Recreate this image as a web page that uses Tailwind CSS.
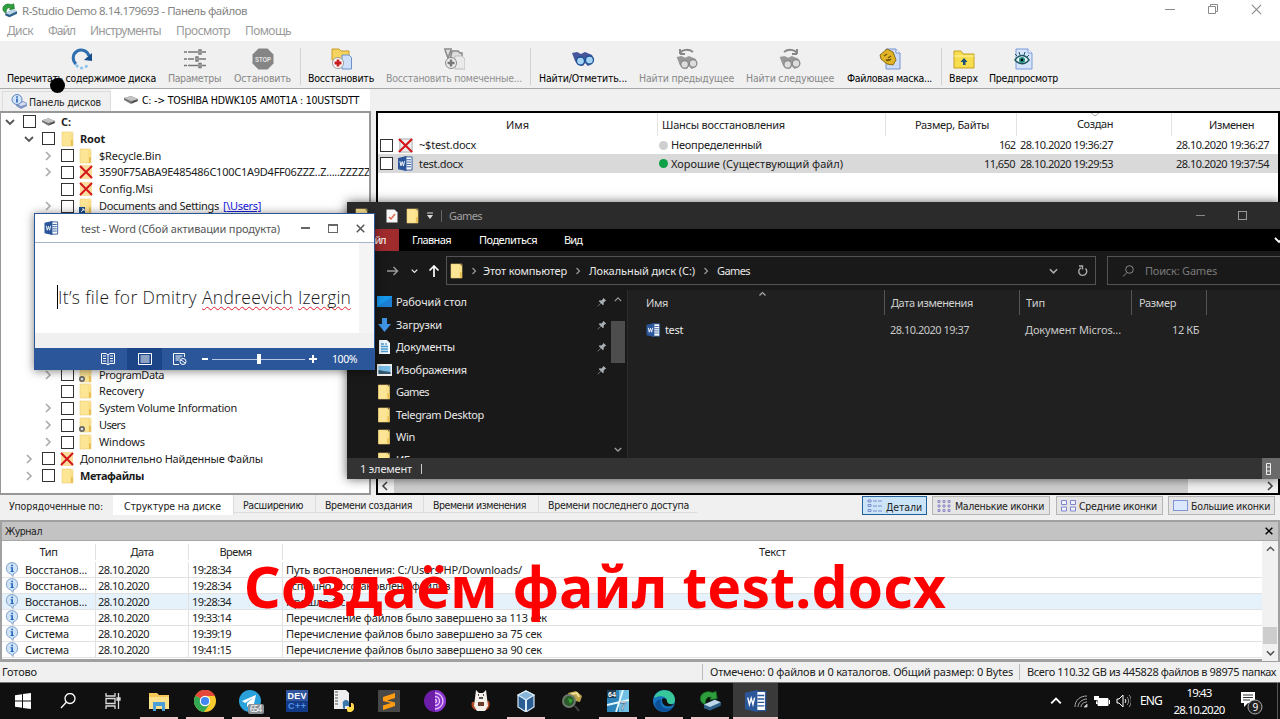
<!DOCTYPE html>
<html lang="ru">
<head>
<meta charset="utf-8">
<title>R-Studio Demo</title>
<script src="https://cdn.jsdelivr.net/npm/@tailwindcss/browser@4"></script>
</head>
<body class="w-[1280px] h-[719px] overflow-hidden bg-[#f0f0f0] font-['Noto_Sans',sans-serif] text-[11px] leading-4 text-[#222]">
<svg class="hidden">
  <symbol id="folder" viewBox="0 0 14 16"><path d="M1 1h9l2 2v12H1z" fill="#fbe08a"/><path d="M1 1h8v14H1z" fill="#fde596"/><path d="M10 9l2 .5V15h-2z" fill="#e9bd4e"/><path d="M1 1h11v14H1z" fill="none" stroke="#efcf74" stroke-width=".6"/></symbol>
  <symbol id="cross" viewBox="0 0 14 16"><path d="M1 1h12v14H1z" fill="#fbdc9c"/><path d="M1 2l12 12M13 2L1 14" stroke="#d3161c" stroke-width="2" fill="none"/></symbol>
  <symbol id="drive" viewBox="0 0 16 10"><path d="M1 3l7-2 7 3v2l-7 3-7-4z" fill="#777"/><path d="M1 3l7-2 7 3-7 2z" fill="#c4c4c4"/><path d="M9 7l5-2v1L9 8z" fill="#333"/></symbol>
  <symbol id="word" viewBox="0 0 16 16"><path d="M7 1h8v14H7z" fill="#fff" stroke="#2b579a"/><path d="M9 4h5M9 6.5h5M9 9h5M9 11.5h5" stroke="#2b579a"/><path d="M0 2l9-2v16l-9-2z" fill="#2b579a"/><path d="M2 5.5l1.2 5 1.3-4.5 1.3 4.5 1.2-5" stroke="#fff" fill="none"/></symbol>
  <symbol id="right" viewBox="0 0 8 10"><path d="M2 1l4 4-4 4" fill="none" stroke="currentColor" stroke-width="1.6"/></symbol>
  <symbol id="down" viewBox="0 0 10 8"><path d="M1 2l4 4 4-4" fill="none" stroke="currentColor" stroke-width="1.8"/></symbol>
  <symbol id="up" viewBox="0 0 10 8"><path d="M1 6l4-4 4 4" fill="none" stroke="currentColor" stroke-width="1.6"/></symbol>
  <symbol id="left" viewBox="0 0 8 10"><path d="M6 1L2 5l4 4" fill="none" stroke="currentColor" stroke-width="1.6"/></symbol>
  <symbol id="x" viewBox="0 0 12 12"><path d="M1 1l10 10M11 1L1 11" fill="none" stroke="currentColor" stroke-width="1.3"/></symbol>
  <symbol id="info" viewBox="0 0 14 16"><path d="M7 .7a6 6 0 0 1 1.5 11.8L8 15.5 5.500 12.500A6 6 0 0 1 7 .7z" fill="#cfe3f8" stroke="#7d9cc4"/><path d="M6.200 3h1.800v1.600H6.200zM5.500 5.700H8v4h.8v1H5.500v-1h.8V6.700h-.8z" fill="#1c62b8"/></symbol>
  <symbol id="pin" viewBox="0 0 12 12"><path d="M7.500.8l3.700 3.700-1.200.2-2 2 .1 2.300-1 .8-2.300-2.300L1 11.500.600 11.100l3.800-3.900L2.200 5l.9-1 2.300.1 2-2z" fill="#a9b0b5"/></symbol>
  <symbol id="bino" viewBox="0 0 24 16"><path d="M1 2l5-1 4 2 4-2 7 3 2 4-2 5-4 2-3-3-2 3-5-1-3-4z" fill="var(--a)"/><circle cx="9.500" cy="10" r="4" fill="var(--b)" stroke="var(--c)" stroke-width="1.300"/><circle cx="18.500" cy="9" r="4" fill="var(--b)" stroke="var(--c)" stroke-width="1.300"/></symbol>
  <symbol id="rs" viewBox="0 0 20 18"><path d="M2 7C2 2 8 0 12 2l3-1 1 6-6 1 1-2C8 5 6 7 6 12 3 11 2 9 2 7z" fill="#2f9e3c" stroke="#136a24" stroke-width=".7"/><path d="M5 12l9-4 5 2v3l-9 4-5-2z" fill="#2d5f87"/><path d="M5 12l9-4 5 2-9 4z" fill="#bdd8e8"/></symbol>
</svg>

<div class="flex flex-col w-[1280px] h-[719px] relative">
  <!-- Title bar -->
  <header class="flex items-center h-[22px] bg-white shrink-0 text-[#858585] text-[11.500px]">
    <svg class="w-[17px] h-[15px] ml-px mb-0.5 shrink-0"><use href="#rs"/></svg>
    <span data-fit class="ml-1 w-[225px]">R-Studio Demo 8.14.179693 - Панель файлов</span>
    <div class="flex items-center ml-auto mr-[18px] gap-[33px] mb-1 text-[#8a8a8a]">
      <svg class="w-[10px] h-[10px]" fill="none" stroke="currentColor"><path d="M0 5.500h10"/></svg>
      <svg class="w-[10px] h-[10px]" fill="none" stroke="currentColor"><path d="M.5 2.500h7v7h-7zM2.500 2.500v-2h7v7h-2"/></svg>
      <svg class="w-[11px] h-[11px]"><use href="#x"/></svg>
    </div>
  </header>
  <nav class="flex items-center h-[19px] bg-white shrink-0 text-[#9a9a9a] text-[12px] pb-[1px]">
    <span data-fit class="ml-[7px] w-[26px]">Диск</span><span data-fit class="ml-[15px] w-[27px]">Файл</span><span data-fit class="ml-[15px] w-[71px]">Инструменты</span><span data-fit class="ml-[15px] w-[54px]">Просмотр</span><span data-fit class="ml-[15px] w-[46px]">Помощь</span>
  </nav>

  <!-- Toolbar -->
  <div class="flex h-[48px] shrink-0 pt-[7px] pl-[7px] border-b border-[#a8a8a8] bg-[#f0f0f0] font-['DejaVu_Sans_Condensed','DejaVu_Sans',sans-serif] text-[10.500px] text-black">
    <div class="flex flex-col items-center w-[149px]"><svg class="size-[22px]" viewBox="0 0 22 22"><path d="M5 16A8 8 0 1 1 18 8" fill="none" stroke="#2f6fb0" stroke-width="3"/><path d="M21 5v8l-8-1z" fill="#174f8c"/><path d="M5 17c4 4 8 4 12 0" fill="none" stroke="#8cc3ec" stroke-width="2.500" stroke-dasharray="3 2"/></svg><span data-fit class="w-full">Перечитать содержимое диска</span></div>
    <div class="flex flex-col items-center w-[53px] ml-3 text-[#888]"><svg class="size-[22px]" viewBox="0 0 22 22" fill="none" stroke="#777" stroke-width="1.400"><path d="M0 4h3M4 4h10M18 4h4M15 2h2v4h-2zM0 11h3M4 11h6M15 11h7M12 9h2v4h-2zM0 17.500h3M4 17.500h10M18 17.500h4M15 15.500h2v4h-2z"/></svg><span data-fit class="w-full">Параметры</span></div>
    <div class="flex flex-col items-center w-[57px] ml-[13px] text-[#888]"><svg class="size-[22px]" viewBox="0 0 22 22"><path d="M6.500.5h9l6 6v9l-6 6h-9l-6-6v-9z" fill="#858585"/><text x="3" y="14" font-size="8" font-weight="700" textLength="16" lengthAdjust="spacingAndGlyphs" fill="#e4e4e4" font-family="Liberation Sans">STOP</text></svg><span data-fit class="w-full">Остановить</span></div>
    <i class="w-px h-[37px] ml-[9px] bg-[#d2d2d2]"></i>
    <div class="flex flex-col items-center w-[66px] ml-[7px]"><svg class="size-[22px]" viewBox="0 0 22 22"><path d="M2 1h7l2 2h8v9H2z" fill="#f5d35e" stroke="#c99b28"/><path d="M12 7h7l2.500 2.500V21H12z" fill="#cfe0fa" stroke="#6d8fce"/><circle cx="8" cy="15" r="5.500" fill="#fff" stroke="#999"/><path d="M8 11.500v7M4.500 15h7" stroke="#c81e1e" stroke-width="2.800"/></svg><span data-fit class="w-full">Восстановить</span></div>
    <div class="flex flex-col items-center w-[136px] ml-3 text-[#909090]"><svg class="size-[22px]" viewBox="0 0 22 22"><path d="M1 1h8M2 2l3 8 3-8M9 3h6l2 2h2v7H7z" fill="#ddd" stroke="#888" stroke-width="1.500"/><path d="M12 8h7l3 3v10H12z" fill="#eaeaea" stroke="#bbb"/><circle cx="8" cy="15" r="5.500" fill="#eee" stroke="#888"/><path d="M8 11.500v7M4.500 15h7" stroke="#777" stroke-width="2.500"/></svg><span data-fit class="w-full">Восстановить помеченные...</span></div>
    <i class="w-px h-[37px] ml-2 bg-[#d2d2d2]"></i>
    <div class="flex flex-col items-center w-[88px] ml-2 [--a:#46569c] [--b:#a5d4f5] [--c:#1d5294]"><svg class="w-6 h-[16px] mt-[3px] mb-[3px]"><use href="#bino"/></svg><span data-fit class="w-full">Найти/Отметить...</span></div>
    <div class="flex flex-col items-center w-[95px] ml-3 text-[#888] [--a:#999] [--b:#ddd] [--c:#888]"><svg class="w-6 h-[7px]" viewBox="0 0 24 7"><path d="M5 6V1M5 6h5M5 5c3-4 9-4 13-1" fill="none" stroke="#888" stroke-width="2"/></svg><svg class="w-6 h-[15px]"><use href="#bino"/></svg><span data-fit class="w-full">Найти предыдущее</span></div>
    <div class="flex flex-col items-center w-[88px] ml-3 text-[#888] [--a:#999] [--b:#ddd] [--c:#888]"><svg class="w-6 h-[7px]" viewBox="0 0 24 7"><path d="M19 6V1M19 6h-5M19 5C16 1 10 1 6 4" fill="none" stroke="#888" stroke-width="2"/></svg><svg class="w-6 h-[15px]"><use href="#bino"/></svg><span data-fit class="w-full">Найти следующее</span></div>
    <div class="flex flex-col items-center w-[85px] ml-[13px]"><svg class="size-[22px]" viewBox="0 0 22 22"><path d="M7 1h10l4 4v16H7z" fill="#ccdcfa" stroke="#7894d4"/><path d="M17 1v4h4" fill="#fff" stroke="#7894d4"/><path d="M1 7l7-6 6 3 3 8-3 5-6-1-6-5z" fill="#e0b426" stroke="#8f6b10"/><path d="M5 8l3-2M9 10l3-2M7 12c2 1 4 0 5-1" stroke="#7a5a08" stroke-width="1.500"/></svg><span data-fit class="w-full">Файловая маска...</span></div>
    <i class="w-px h-[37px] ml-[9px] bg-[#d2d2d2]"></i>
    <div class="flex flex-col items-center w-[29px] ml-[7px]"><svg class="size-[22px]" viewBox="0 0 22 22"><path d="M1 3h7l2 3h11v14H1z" fill="#f8de4e" stroke="#c7a022"/><path d="M1 8h20" stroke="#fff3a5"/><path d="M11 10l3.500 4h-2v3H10v-3H7.500z" fill="#1b4e78"/></svg><span data-fit class="w-full">Вверх</span></div>
    <div class="flex flex-col items-center w-[69px] ml-[11px]"><svg class="size-[22px]" viewBox="0 0 22 22"><path d="M3 1h12l4 4v16H3z" fill="#d5e3fb" stroke="#7c9bdb"/><path d="M15 1v4h4" fill="#fff" stroke="#7c9bdb"/><path d="M2 12c4-6 10-6 14 0-4 5-10 5-14 0z" fill="#e6f7f5" stroke="#1d5460" stroke-width="1.400"/><circle cx="9" cy="12" r="3" fill="#238b80"/><circle cx="9" cy="12" r="1.200" fill="#000"/><path d="M4 8L2 6M7 7L6 4M11 7l1-3M14 9l2-2" stroke="#1d5460"/></svg><span data-fit class="w-full">Предпросмотр</span></div>
  </div>

  <!-- Panel tabs -->
  <div class="flex h-[22px] shrink-0 items-end font-['DejaVu_Sans_Condensed','DejaVu_Sans',sans-serif] text-[10.500px]">
    <div class="flex items-center h-[20px] w-[109px] ml-0.5 pl-2 border border-b-0 border-[#dcdcdc]"><svg class="w-[16px] h-[15px] shrink-0" viewBox="0 0 16 15"><path d="M6 9l6-2 4 2v3l-6 3-5-3z" fill="#7f95c3"/><path d="M6 10l6-2 4 2-6 2z" fill="#d4def3"/><circle cx="6" cy="5.500" r="5" fill="#d2e4f9" stroke="#5f83bd"/><path d="M6 2.300v1.400M6 4.600v4" stroke="#1c55a8" stroke-width="1.500"/></svg><span data-fit class="ml-[2px] w-[72px]">Панель дисков</span></div>
    <div class="flex items-center h-[22px] w-[259px] pl-[12px] bg-white text-black"><svg class="w-4 h-[10px] shrink-0"><use href="#drive"/></svg><span data-fit class="ml-[3px] w-[217px]">C: -> TOSHIBA HDWK105 AM0T1A : 10USTSDTT</span></div>
  </div>

  <!-- Panes -->
  <main class="flex h-[384px] shrink-0">
    <section class="w-[371px] border-2 border-[#979797] border-l bg-white overflow-hidden text-[#1c1c1c]">
      <div class="flex items-center h-[16.850px] mt-[0.500px] pl-1 font-bold"><svg class="w-[10px] h-2 text-[#555]"><use href="#down"/></svg><i class="size-[13px] border border-[#333] ml-[8px]"></i><svg class="w-[15px] h-[10px] ml-[5px]"><use href="#drive"/></svg><span data-fit class="ml-[5px] w-[10px]">C:</span></div>
      <div class="flex items-center h-[16.850px] pl-[23px] font-bold"><svg class="w-[10px] h-2 text-[#555]"><use href="#down"/></svg><i class="size-[13px] border border-[#333] ml-[8px]"></i><svg class="w-[14px] h-4 ml-[6px]"><use href="#folder"/></svg><span data-fit class="ml-[5px] w-[25px]">Root</span></div>
      <div class="flex items-center h-[16.850px] pl-[43px]"><svg class="w-2 h-[10px] text-[#aaa]"><use href="#right"/></svg><i class="size-[13px] border border-[#333] ml-[9px]"></i><svg class="w-[14px] h-4 ml-[5px]"><use href="#folder"/></svg><span data-fit class="ml-[6px] w-[62px]">$Recycle.Bin</span></div>
      <div class="flex items-center h-[16.850px] pl-[43px]"><svg class="w-2 h-[10px] shrink-0 text-[#aaa]"><use href="#right"/></svg><i class="size-[13px] border border-[#333] ml-[9px] shrink-0"></i><svg class="w-[14px] h-4 ml-[5px] shrink-0"><use href="#cross"/></svg><span data-fit class="ml-[6px] w-[271px] shrink-0">3590F75ABA9E485486C100C1A9D4FF06ZZZ..Z.....ZZZZZ</span></div>
      <div class="flex items-center h-[16.850px] pl-[60px]"><i class="size-[13px] border border-[#333]"></i><svg class="w-[14px] h-4 ml-[5px]"><use href="#cross"/></svg><span data-fit class="ml-[6px] w-[54px]">Config.Msi</span></div>
      <div class="flex items-center h-[16.850px] pl-[43px]"><svg class="w-2 h-[10px] text-[#aaa]"><use href="#right"/></svg><i class="size-[13px] border border-[#333] ml-[9px]"></i><svg class="w-[14px] h-4 ml-[5px]" viewBox="0 0 14 16"><use href="#folder"/><path d="M0 9h6v6H0z" fill="#1d4c86"/><path d="M2 14l3-3M3 11h2v2" stroke="#fff" fill="none"/></svg><span data-fit class="ml-[6px] w-[120px]">Documents and Settings</span><span data-fit class="ml-[4px] w-[38px] underline text-[#2020e0]">[\Users]</span></div>
      <div class="h-[151.650px]"></div>
      <div class="flex items-center h-[16.850px] pl-[43px]"><svg class="w-2 h-[10px] text-[#aaa]"><use href="#right"/></svg><i class="size-[13px] border border-[#333] ml-[9px]"></i><svg class="w-[14px] h-4 ml-[5px]" viewBox="0 0 14 16"><use href="#folder"/><circle cx="3" cy="12" r="3" fill="#666"/><circle cx="3" cy="12" r="1.300" fill="#ddd"/></svg><span data-fit class="ml-[6px] w-[65px]">ProgramData</span></div>
      <div class="flex items-center h-[16.850px] pl-[60px]"><i class="size-[13px] border border-[#333]"></i><svg class="w-[14px] h-4 ml-[5px]"><use href="#folder"/></svg><span data-fit class="ml-[6px] w-[45px]">Recovery</span></div>
      <div class="flex items-center h-[16.850px] pl-[43px]"><svg class="w-2 h-[10px] text-[#aaa]"><use href="#right"/></svg><i class="size-[13px] border border-[#333] ml-[9px]"></i><svg class="w-[14px] h-4 ml-[5px]"><use href="#folder"/></svg><span data-fit class="ml-[6px] w-[138px]">System Volume Information</span></div>
      <div class="flex items-center h-[16.850px] pl-[43px]"><svg class="w-2 h-[10px] text-[#aaa]"><use href="#right"/></svg><i class="size-[13px] border border-[#333] ml-[9px]"></i><svg class="w-[14px] h-4 ml-[5px]" viewBox="0 0 14 16"><use href="#folder"/><circle cx="3" cy="12" r="3" fill="#666"/><circle cx="3" cy="12" r="1.300" fill="#ddd"/></svg><span data-fit class="ml-[6px] w-[26px]">Users</span></div>
      <div class="flex items-center h-[16.850px] pl-[43px]"><svg class="w-2 h-[10px] text-[#aaa]"><use href="#right"/></svg><i class="size-[13px] border border-[#333] ml-[9px]"></i><svg class="w-[14px] h-4 ml-[5px]"><use href="#folder"/></svg><span data-fit class="ml-[6px] w-[46px]">Windows</span></div>
      <div class="flex items-center h-[16.850px] pl-[24px]"><svg class="w-2 h-[10px] text-[#aaa]"><use href="#right"/></svg><i class="size-[13px] border border-[#333] ml-[9px]"></i><svg class="w-[14px] h-4 ml-[5px]"><use href="#cross"/></svg><span data-fit class="ml-[6px] w-[183px]">Дополнительно Найденные Файлы</span></div>
      <div class="flex items-center h-[16.850px] pl-[24px] font-bold"><svg class="w-2 h-[10px] text-[#aaa]"><use href="#right"/></svg><i class="size-[13px] border border-[#333] ml-[9px]"></i><svg class="w-[14px] h-4 ml-[6px]"><use href="#folder"/></svg><span data-fit class="ml-[5px] w-[64px]">Метафайлы</span></div>
    </section>

    <section class="flex flex-col w-[904px] ml-[5px] border-2 border-black bg-white">
      <div class="flex h-[23px] items-center">
        <div class="flex justify-center w-[280px] border-r border-[#e3e3e3] h-full items-center"><span data-fit class="w-[23px]">Имя</span></div>
        <div class="flex items-center w-[228px] border-r border-[#e3e3e3] h-full pl-1"><span data-fit class="w-[123px]">Шансы восстановления</span></div>
        <div class="flex items-center w-[131px] border-r border-[#e3e3e3] h-full pl-[29px]"><span data-fit class="w-[74px]">Размер, Байты</span></div>
        <div class="flex flex-col w-[155px] border-r border-[#e3e3e3] h-full pl-[60px]"><svg class="w-2 h-[4px] ml-[14px] -mb-[1px] text-[#aaa]" viewBox="0 0 8 4"><path d="M0 0l4 3 4-3" stroke="currentColor" fill="none"/></svg><span data-fit class="w-[36px]">Создан</span></div>
        <div class="flex items-center h-full pl-[37px]"><span data-fit class="w-[45px]">Изменен</span></div>
      </div>
      <div class="flex h-[18px] items-center pl-[2px]">
        <i class="size-[13px] border border-[#333] bg-white"></i><svg class="size-[15px] ml-[5px]" viewBox="0 0 16 16"><path d="M2 1h13v14H2z" fill="#eee" stroke="#aaa"/><path d="M1 1l14 14M15 1L1 15" stroke="#d3161c" stroke-width="2.300"/></svg><span data-fit class="ml-[6px] w-[57px]">~$test.docx</span>
        <i class="size-[9px] rounded-full bg-[#cfcfcf] ml-[183px]"></i><span data-fit class="ml-[3px] w-[91px]">Неопределенный</span>
        <span data-fit class="ml-[237px] w-[16px]">162</span><span data-fit class="ml-[5px] w-[93px]">28.10.2020 19:36:27</span><span data-fit class="ml-[63px] w-[93px]">28.10.2020 19:36:27</span>
      </div>
      <div class="flex h-[19px] items-center pl-[2px] bg-[#d9d9d9]">
        <i class="size-[13px] border border-[#333] bg-white"></i><svg class="size-[15px] ml-[5px]"><use href="#word"/></svg><span data-fit class="ml-[6px] w-[44px]">test.docx</span>
        <i class="size-[9px] rounded-full bg-[#0da046] ml-[196px]"></i><span data-fit class="ml-[3px] w-[172px]">Хорошие (Существующий файл)</span>
        <span data-fit class="ml-[141px] w-[31px]">11,650</span><span data-fit class="ml-[5px] w-[93px]">28.10.2020 19:29:53</span><span data-fit class="ml-[63px] w-[93px]">28.10.2020 19:37:54</span>
      </div>
      <div class="flex items-center h-[15px] mt-auto bg-[#f1f1f1] text-[#444] pl-[3px] pr-[4px]"><svg class="w-2 h-[10px]"><use href="#left"/></svg><i class="w-[794px] h-full bg-[#cdcdcd] ml-[5px]"></i><svg class="w-2 h-[10px] ml-auto"><use href="#right"/></svg></div>
    </section>
  </main>

  <!-- Sort tabs and view buttons -->
  <div class="flex h-[25px] shrink-0 font-['DejaVu_Sans_Condensed','DejaVu_Sans',sans-serif] text-[10.500px]">
    <span data-fit class="ml-[9px] w-[94px] mt-[3px]">Упорядоченные по:</span>
    <div class="flex ml-[10px] h-[20px] w-[121px] pl-[11px] pt-[3px] bg-white border-r border-[#dcdcdc]"><span data-fit class="w-[97px]">Структуре на диске</span></div>
    <div class="flex h-[18px] w-[82px] pl-[9px] pt-[2px] border-r border-b border-[#dcdcdc]"><span data-fit class="w-[60px]">Расширению</span></div>
    <div class="flex h-[18px] w-[108px] pl-[9px] pt-[2px] border-r border-b border-[#dcdcdc]"><span data-fit class="w-[87px]">Времени создания</span></div>
    <div class="flex h-[18px] w-[115px] pl-[9px] pt-[2px] border-r border-b border-[#dcdcdc]"><span data-fit class="w-[93px]">Времени изменения</span></div>
    <div class="flex h-[18px] w-[158px] pl-[9px] pt-[2px] border-b border-[#dcdcdc]"><span data-fit class="w-[141px]">Времени последнего доступа</span></div>
    <div class="flex items-center mt-px h-[19px] w-[65px] ml-[165px] pl-1 bg-[#cce4f8] border border-[#235f99]"><svg class="w-[16px] h-[14px] mr-[3px]" viewBox="0 0 16 14" fill="none" stroke="#7e8bcf"><path d="M1 1h3v2H1zM1 5.500h3v2H1zM1 10.500h3v2H1z"/><path d="M6 2h10M6 7h10M6 12h10" stroke-dasharray="4 1"/></svg><span data-fit class="w-[36px] mt-0.5">Детали</span></div>
    <div class="flex items-center mt-px h-[19px] w-[118px] ml-[5px] pl-1 bg-[#e5e5e5] border border-[#b5b5b5]"><svg class="w-[15px] h-[12px] mr-[3px] shrink-0" viewBox="0 0 15 12" fill="none" stroke="#8a86c4"><path d="M1 .5h2v2H1zM6 .5h2v2H6zM11 .5h2v2h-2zM1 5h2v2H1zM6 5h2v2H6zM11 5h2v2h-2zM1 9.500h2v2H1zM6 9.500h2v2H6zM11 9.500h2v2h-2z"/></svg><span data-fit class="w-[89px]">Маленькие иконки</span></div>
    <div class="flex items-center mt-px h-[19px] w-[107px] ml-[6px] pl-1 bg-[#e5e5e5] border border-[#b5b5b5]"><svg class="w-[15px] h-[12px] mr-[3px] shrink-0" viewBox="0 0 15 12" fill="#eef3ff" stroke="#8084cc"><path d="M.5.5h5v4h-5zM9.500.5h5v4h-5zM.5 7h5v4h-5zM9.500 7h5v4h-5z"/></svg><span data-fit class="w-[78px]">Средние иконки</span></div>
    <div class="flex items-center mt-px h-[19px] w-[107px] ml-[5px] pl-1 bg-[#e5e5e5] border border-[#b5b5b5]"><i class="w-[15px] h-[11px] mr-[3px] shrink-0 border border-[#7f95d8] bg-[#dce8ff]"></i><span data-fit class="w-[79px]">Большие иконки</span></div>
  </div>

  <!-- Journal -->
  <section class="flex flex-col h-[142px] shrink-0 border-t-2 border-b-[3px] border-x-2 border-[#a0a0a0] bg-white">
    <div class="flex items-center h-[19px] bg-[#c3c3c3] border-b border-[#a6a6a6] pl-[3px] pr-[5px] shrink-0"><span data-fit class="w-[37px] font-['DejaVu_Sans_Condensed',sans-serif] text-[10.500px]">Журнал</span><svg class="size-[8px] ml-auto text-black" viewBox="0 0 12 12"><path d="M1 1l10 10M11 1L1 11" stroke="#000" stroke-width="2.200"/></svg></div>
    <div class="flex grow">
      <div class="w-[1260px]">
        <div class="flex h-[21px] items-center">
          <div class="flex justify-center w-[94px] border-r border-[#e2e2e2]"><span data-fit class="w-[18px]">Тип</span></div><div class="flex justify-center w-[93px] border-r border-[#e2e2e2]"><span data-fit class="w-[23px]">Дата</span></div><div class="flex justify-center w-[94px] border-r border-[#e2e2e2]"><span data-fit class="w-[32px]">Время</span></div><div class="flex justify-center w-[979px]"><span data-fit class="w-[27px]">Текст</span></div>
        </div>
        <div class="flex h-4 border-b border-[#e2e2e2]"><div class="flex w-[94px] border-r border-[#e2e2e2] pl-[3px]"><svg class="w-[14px] h-[15px] mr-[6px]"><use href="#info"/></svg><span data-fit class="w-[62px]">Восстанов...</span></div><div class="flex w-[93px] border-r border-[#e2e2e2] pl-[2px]"><span data-fit class="w-[51px]">28.10.2020</span></div><div class="flex w-[94px] border-r border-[#e2e2e2] pl-[3px]"><span data-fit class="w-[39px]">19:28:34</span></div><span data-fit class="ml-[3px] w-[236px]">Путь востановления: C:/Users/HP/Downloads/</span></div>
        <div class="flex h-4 border-b border-[#e2e2e2]"><div class="flex w-[94px] border-r border-[#e2e2e2] pl-[3px]"><svg class="w-[14px] h-[15px] mr-[6px]"><use href="#info"/></svg><span data-fit class="w-[62px]">Восстанов...</span></div><div class="flex w-[93px] border-r border-[#e2e2e2] pl-[2px]"><span data-fit class="w-[51px]">28.10.2020</span></div><div class="flex w-[94px] border-r border-[#e2e2e2] pl-[3px]"><span data-fit class="w-[39px]">19:28:34</span></div><span data-fit class="ml-[3px] w-[164px]">Успешно восстановлено файлов</span></div>
        <div class="flex h-4 border-b border-[#e2e2e2] bg-[#e5f2fc]"><div class="flex w-[94px] border-r border-[#e2e2e2] pl-[3px]"><svg class="w-[14px] h-[15px] mr-[6px]"><use href="#info"/></svg><span data-fit class="w-[62px]">Восстанов...</span></div><div class="flex w-[93px] border-r border-[#e2e2e2] pl-[2px]"><span data-fit class="w-[51px]">28.10.2020</span></div><div class="flex w-[94px] border-r border-[#e2e2e2] pl-[3px]"><span data-fit class="w-[39px]">19:28:34</span></div><span data-fit class="ml-[3px] w-[62px]">Прошло 1 с.</span></div>
        <div class="flex h-4 border-b border-[#e2e2e2]"><div class="flex w-[94px] border-r border-[#e2e2e2] pl-[3px]"><svg class="w-[14px] h-[15px] mr-[6px]"><use href="#info"/></svg><span data-fit class="w-[44px]">Система</span></div><div class="flex w-[93px] border-r border-[#e2e2e2] pl-[2px]"><span data-fit class="w-[51px]">28.10.2020</span></div><div class="flex w-[94px] border-r border-[#e2e2e2] pl-[3px]"><span data-fit class="w-[39px]">19:33:14</span></div><span data-fit class="ml-[3px] w-[261px]">Перечисление файлов было завершено за 113 сек</span></div>
        <div class="flex h-4 border-b border-[#e2e2e2]"><div class="flex w-[94px] border-r border-[#e2e2e2] pl-[3px]"><svg class="w-[14px] h-[15px] mr-[6px]"><use href="#info"/></svg><span data-fit class="w-[44px]">Система</span></div><div class="flex w-[93px] border-r border-[#e2e2e2] pl-[2px]"><span data-fit class="w-[51px]">28.10.2020</span></div><div class="flex w-[94px] border-r border-[#e2e2e2] pl-[3px]"><span data-fit class="w-[39px]">19:39:19</span></div><span data-fit class="ml-[3px] w-[256px]">Перечисление файлов было завершено за 75 сек</span></div>
        <div class="flex h-4 border-b border-[#e2e2e2]"><div class="flex w-[94px] border-r border-[#e2e2e2] pl-[3px]"><svg class="w-[14px] h-[15px] mr-[6px]"><use href="#info"/></svg><span data-fit class="w-[44px]">Система</span></div><div class="flex w-[93px] border-r border-[#e2e2e2] pl-[2px]"><span data-fit class="w-[51px]">28.10.2020</span></div><div class="flex w-[94px] border-r border-[#e2e2e2] pl-[3px]"><span data-fit class="w-[39px]">19:41:15</span></div><span data-fit class="ml-[3px] w-[256px]">Перечисление файлов было завершено за 90 сек</span></div>
      </div>
      <div class="flex flex-col items-center w-4 bg-[#f1f1f1] py-1 text-[#555]"><svg class="w-[9px] h-[8px]"><use href="#up"/></svg><i class="w-[14px] h-[17px] bg-[#cdcdcd] mt-[74px]"></i><svg class="w-[9px] h-[8px] mt-[5px]"><use href="#down"/></svg></div>
    </div>
  </section>
  <footer class="flex h-[20px] shrink-0 items-center pl-[2px] bg-[#f0f0f0]"><span data-fit class="w-[35px]">Готово</span><i class="w-px h-[16px] bg-[#bbb] ml-[665px]"></i><span data-fit class="w-[303px] ml-[7px]">Отмечено: 0 файлов и 0 каталогов. Общий размер: 0 Bytes</span><i class="w-px h-[16px] bg-[#bbb] ml-[6px]"></i><span data-fit class="w-[249px] ml-[7px]">Всего 110.32 GB из 445828 файлов в 98975 папках</span></footer>

  <!-- Taskbar -->
  <footer class="flex h-[37px] shrink-0 bg-[#101010] border-t border-[#777] text-white">
    <div class="flex w-[45px] items-center justify-center"><svg class="size-[16px]" viewBox="0 0 16 16" fill="#fff"><path d="M0 2.200l7-1v6.400H0zM8 1l8-1v7.600H8zM0 8.400h7v6.400l-7-1zM8 8.400h8V16l-8-1z"/></svg></div>
    <div class="flex w-[45px] items-center justify-center"><svg class="size-[16px]" viewBox="0 0 16 16" fill="none" stroke="#fff" stroke-width="1.300"><circle cx="10" cy="5.500" r="5"/><path d="M6.500 9L1 15"/></svg></div>
    <div class="flex w-[45px] items-center justify-center"><svg class="size-[16px]" viewBox="0 0 16 16" fill="none" stroke="#ddd" stroke-width="1.300"><path d="M1 0v3h9V0M1 5.500h9v5H1zM1 16v-3h9v3M13.500 0v16M12 5h3v2h-3z"/></svg></div>
    <div class="flex w-[47px] items-center flex-col pt-[7px]"><svg class="size-[22px]" viewBox="0 0 22 22"><path d="M1 3h8l2 2h10v14H1z" fill="#f6c956"/><path d="M1 7h20v12H1z" fill="#fde08a"/><path d="M5 21v-9h12v9h-3v-5H8v5z" fill="#4b9fd8"/></svg><i class="mt-auto w-[38px] h-[2px] bg-[#f0c3c8]"></i></div>
    <div class="flex w-[46px] items-center flex-col pt-[7px]"><svg class="size-[22px]" viewBox="0 0 22 22"><circle cx="11" cy="11" r="11" fill="#f8cb2e"/><path d="M11 11L1.500 5.500A11 11 0 0 0 10 22l5.500-8z" fill="#33a852"/><path d="M11 11L1.500 5.500A11 11 0 0 1 21 6H11z" fill="#e5473b"/><circle cx="11" cy="11" r="5.200" fill="#fff"/><circle cx="11" cy="11" r="4.100" fill="#4285f4"/></svg><i class="mt-auto w-[38px] h-[2px] bg-[#f0c3c8]"></i></div>
    <div class="flex w-[46px] items-center flex-col pt-[7px]"><svg class="w-[26px] h-[24px]" viewBox="0 0 26 24"><circle cx="12" cy="11" r="11" fill="#2ba1dc"/><path d="M4 11l14-6-3 13-4-3-2 2v-4l6-5-8 5z" fill="#fff"/><rect x="10" y="14" width="16" height="10" rx="2" fill="#8b9298"/><text x="12" y="22" font-size="8" fill="#fff" font-family="Noto Sans" textLength="12">654</text></svg><i class="mt-auto w-[38px] h-[2px] bg-[#f0c3c8]"></i></div>
    <div class="flex w-[46px] items-center flex-col pt-[7px]"><svg class="size-[22px]" viewBox="0 0 22 22"><path d="M0 0h22v22H0z" fill="#123a86"/><path d="M0 0h22v11H0z" fill="#31559f"/><text x="1.500" y="9" font-size="9" font-weight="700" fill="#fff" font-family="Liberation Sans" textLength="19">DEV</text><text x="2" y="19" font-size="9" font-weight="700" fill="#4f92e8" font-family="Liberation Sans" textLength="18">C++</text></svg></div>
    <div class="flex w-[46px] items-center flex-col pt-[7px]"><svg class="size-[22px]" viewBox="0 0 22 22"><path d="M2 0h12l3 3v16H2z" fill="#eee"/><path d="M3 2h3M3 5h3M3 8h3M3 11h3M3 14h3" stroke="#555"/><path d="M11 15c-2-6 7-7 6-1v2h-4v3c-3 0-2-3-2-4z" fill="#3c78aa"/><path d="M22 17c1 6-8 7-7 2v-2h4v-4c3 0 3 2 3 4z" fill="#ffd94c"/></svg></div>
    <div class="flex w-[46px] items-center flex-col pt-[7px]"><svg class="size-[22px]" viewBox="0 0 22 22"><path d="M0 0h22v22H0z" fill="#484848"/><path d="M5 7l12-4v5L9 10.500l8 2V16L5 20v-4.500l8-2.500-8-2z" fill="#ff9c12"/></svg></div>
    <div class="flex w-[46px] items-center flex-col pt-[7px]"><svg class="size-[22px]" viewBox="0 0 22 22"><circle cx="11" cy="11" r="11" fill="#6d1ea8"/><path d="M11 0a11 11 0 0 1 0 22z" fill="#8b36cc"/><path d="M11 3a8 8 0 0 1 0 16M11 6.500a4.500 4.500 0 0 1 0 9M11 9.500a1.500 1.500 0 0 1 0 3" fill="none" stroke="#e9c9ff" stroke-width="1.300"/></svg></div>
    <div class="flex w-[45px] items-center flex-col pt-[7px]"><svg class="size-[22px]" viewBox="0 0 22 22"><path d="M2 12c-2 5 2 9 9 9s10-4 8-10z" fill="#b34a23"/><path d="M6 0l3 3h4l3-3 1 8 1 8-3 5H7l-3-5 1-8z" fill="#f4efe8"/><path d="M8 5h1M13 5h1M9 8h4" stroke="#222" stroke-width="1.400"/><path d="M8 12h6v4H8z" fill="#6b3b2b"/></svg></div>
    <div class="flex w-[46px] items-center flex-col pt-[7px]"><svg class="size-[22px]" viewBox="0 0 22 22" stroke="#dcecf8" stroke-width="1.200"><path d="M11 1l8 4v12l-8 5-8-5V5z" fill="#2b5f94"/><path d="M3 5l8 5 8-5-8-4z" fill="#86b5d8"/><path d="M11 10v11" stroke-width="2"/></svg><i class="mt-auto w-[38px] h-[2px] bg-[#f0c3c8]"></i></div>
    <div class="flex w-[46px] items-center flex-col pt-[7px]"><svg class="size-[22px]" viewBox="0 0 22 22"><path d="M7 3l8-2 6 5-2 6-9-2z" fill="#b9a24b"/><path d="M10 4l6-1 2 4" fill="none" stroke="#f2df94" stroke-width="2"/><circle cx="8" cy="11" r="6" fill="#2b5b2a" stroke="#6d796d" stroke-width="2"/><path d="M7 8l5 2-3 4z" fill="#37a534"/><path d="M14 16l4 5" stroke="#444" stroke-width="2"/></svg></div>
    <div class="flex w-[46px] items-center flex-col pt-[7px]"><svg class="size-[22px]" viewBox="0 0 22 22"><path d="M0 0h22v22H0z" fill="#2c83b8"/><path d="M12 0h10v22H12z" fill="#70c0e3"/><path d="M9 22L16 0M0 15l22-5" stroke="#e8f8ff" stroke-width="1.800"/><path d="M0 0h9v8H0z" fill="#1c3c50"/><text x="1" y="7" font-size="7" font-weight="700" fill="#fff" font-family="Liberation Sans">64</text><text x="13" y="20" font-size="11" font-weight="700" fill="#fff" stroke="#174a72" stroke-width=".5" font-family="Liberation Sans">7</text></svg><i class="mt-auto w-[38px] h-[2px] bg-[#f0c3c8]"></i></div>
    <div class="flex w-[46px] items-center flex-col pt-[7px]"><svg class="size-[22px]" viewBox="0 0 22 22"><circle cx="11" cy="11" r="11" fill="#1674bd"/><path d="M1 8C4-3 22-2 22 10c0 5-7 6-8 2 1-5-6-8-13-4z" fill="#38c79a"/><path d="M8 10c-2 7 5 11 12 7-5 8-16 5-18-2 0-4 4-6 6-5z" fill="#0c5098"/><path d="M9 10c0-3 5-2 5 1 0 2 2 4 7 3-4 4-12 3-12-4z" fill="#101010"/></svg><i class="mt-auto w-[38px] h-[2px] bg-[#f0c3c8]"></i></div>
    <div class="flex w-[46px] items-center flex-col pt-[7px]"><svg class="w-[24px] h-[22px]"><use href="#rs"/></svg><i class="mt-auto w-[38px] h-[2px] bg-[#f0c3c8]"></i></div>
    <div class="flex w-[45px] items-center flex-col pt-[7px] bg-[#3a3a3a]"><svg class="size-[22px]"><use href="#word"/></svg><i class="mt-auto w-[45px] h-[2px] bg-[#f0c3c8]"></i></div>
    <div class="flex items-center ml-auto">
      <svg class="w-[12px] h-[10px]"><use href="#up"/></svg>
      <svg class="size-[14px] ml-[12px]" viewBox="0 0 14 14" fill="none" stroke="#aaa"><path d="M1 13C1 6 6 2 13 2M4 13c0-4 4-8 9-8M7 13c0-3 3-5 6-5"/><path d="M10 13l3-3v3z" fill="#fff"/></svg>
      <svg class="w-[16px] h-[12px] ml-[6px]" viewBox="0 0 16 12"><path d="M4 3.500h10v7H4z" fill="#fff" stroke="#fff"/><path d="M15 5h1v4h-1M0 1h5v4H0zM2 5v4h2" fill="#fff"/></svg>
      <svg class="w-[15px] h-[14px] ml-[6px]" viewBox="0 0 15 14" fill="none" stroke="#fff"><path d="M1 5h2l4-4v12L3 9H1zM9 5c1 1 1 3 0 4"/><path d="M11 3c2 2 2 6 0 8M13 1c3 3 3 9 0 12" stroke="#999"/></svg>
      <span data-fit class="ml-[9px] w-[22px] text-[12px]">ENG</span>
      <div class="flex flex-col items-center w-[52px] ml-[11px] text-[11.500px] gap-px"><span data-fit class="w-[25px]">19:43</span><span data-fit class="w-[51px]">28.10.2020</span></div>
      <svg class="w-[24px] h-[24px] ml-[15px] mt-[3px]" viewBox="0 0 24 24"><path d="M1 1h14v11H8l-4 4v-4H1z" fill="#fff"/><path d="M3 4h10M3 6.500h10M3 9h7" stroke="#333"/><circle cx="15" cy="16" r="7" fill="#222" stroke="#aaa"/><text x="12.500" y="20" font-size="10" fill="#fff" font-family="Noto Sans">9</text></svg>
      <i class="w-px h-[36px] bg-[#555] ml-[13px] mr-[2px]"></i>
    </div>
  </footer>

  <!-- Explorer window -->
  <section class="absolute left-[347px] top-[202px] w-[933px] h-[277px] flex flex-col bg-[#191919] text-[#e8e8e8] shadow-[0_0_10px_rgba(0,0,0,0.6)] overflow-hidden">
    <div class="flex items-center h-[27px] bg-[#2b2b2b] shrink-0 text-[#a0a0a0] pl-[8px]">
      <svg class="w-[14px] h-4"><use href="#folder"/></svg>
      <svg class="w-[12px] h-[14px] ml-[17px]" viewBox="0 0 12 14"><path d="M.5.5h8l3 3v10H.5z" fill="#f7f7f7"/><path d="M3 8l2 2 4-5" fill="none" stroke="#dd6a4c" stroke-width="1.500"/></svg>
      <svg class="w-[14px] h-4 ml-[8px]"><use href="#folder"/></svg>
      <svg class="w-[8px] h-[8px] ml-[6px]" viewBox="0 0 8 8"><path d="M1 1h6" stroke="#ddd"/><path d="M1 3h6L4 7z" fill="#ddd"/></svg>
      <i class="w-px h-[12px] bg-[#666] ml-[7px]"></i><span data-fit class="ml-[7px] w-[33px]">Games</span>
      <i class="w-[9px] h-px bg-[#888] ml-[714px]"></i><i class="size-[9px] border border-[#999] ml-[33px]"></i>
    </div>
    <div class="flex items-center h-[22px] bg-black shrink-0 text-white"><div class="flex items-center w-[52px] h-full bg-[#9f2b2d] pl-[15px]"><span data-fit class="w-[23px]">Файл</span></div><span data-fit class="ml-[13px] w-[39px]">Главная</span><span data-fit class="ml-[28px] w-[58px]">Поделиться</span><span data-fit class="ml-[27px] w-[18px]">Вид</span><svg class="w-[10px] h-2 ml-auto -mr-1"><use href="#down"/></svg></div>
    <div class="flex items-center h-[39px] shrink-0">
      <svg class="w-[12px] h-[10px] ml-[40px] text-[#999] shrink-0" viewBox="0 0 12 10"><path d="M0 5h10M6.500 1l4 4-4 4" stroke="currentColor" stroke-width="1.500" fill="none"/></svg>
      <svg class="w-[7px] h-[6px] ml-[12px] shrink-0" viewBox="0 0 10 8"><use href="#down"/></svg>
      <svg class="w-[12px] h-[12px] ml-[10px] shrink-0" viewBox="0 0 12 12"><path d="M6 12V1M1.500 5.500L6 1l4.500 4.500" stroke="#fff" stroke-width="1.700" fill="none"/></svg>
      <div class="flex items-center w-[650px] h-[29px] ml-[6px] border border-[#535353] pl-[3px] shrink-0"><svg class="w-[14px] h-4"><use href="#folder"/></svg><svg class="w-[6px] h-[8px] ml-[7px] text-[#999]" viewBox="0 0 8 10"><use href="#right"/></svg><span data-fit class="ml-[6px] w-[84px]">Этот компьютер</span><svg class="w-[6px] h-[8px] ml-[8px] text-[#999]" viewBox="0 0 8 10"><use href="#right"/></svg><span data-fit class="ml-[8px] w-[106px]">Локальный диск (C:)</span><svg class="w-[6px] h-[8px] ml-[8px] text-[#999]" viewBox="0 0 8 10"><use href="#right"/></svg><span data-fit class="ml-[8px] w-[33px]">Games</span><svg class="w-[9px] h-[8px] ml-auto text-[#aaa]"><use href="#down"/></svg><svg class="w-[11px] h-[12px] ml-[19px] mr-[7px]" viewBox="0 0 11 12"><path d="M8.500 3.500A4 4 0 1 1 4 2.800M2 1h3.500v3.500" fill="none" stroke="#aaa" stroke-width="1.400"/></svg></div>
      <div class="flex items-center w-[180px] h-[29px] ml-[11px] border border-[#535353] pl-[14px] text-[#7a7a7a] shrink-0"><svg class="size-[12px]" viewBox="0 0 12 12" fill="none" stroke="#888"><circle cx="7.500" cy="4.500" r="3.800"/><path d="M5 7.500L1 11.500"/></svg><span data-fit class="ml-[11px] w-[72px]">Поиск: Games</span></div>
    </div>
    <div class="flex h-[168px] shrink-0 overflow-hidden">
      <div class="flex w-[281px] border-r border-[#2c2c2c]">
        <div class="w-[262px] pl-[30px] pt-[1px]">
          <div class="flex items-center h-[22.500px]"><svg class="w-[15px] h-[12px]" viewBox="0 0 15 12"><path d="M0 0h15v11H0z" fill="#1798ec"/><path d="M0 11L15 1v10z" fill="#1c7fd2"/></svg><span data-fit class="ml-[4px] w-[71px]">Рабочий стол</span><svg class="size-[10px] ml-auto mr-[2px]"><use href="#pin"/></svg></div>
          <div class="flex items-center h-[22.500px]"><svg class="w-[15px] h-[14px]" viewBox="0 0 15 14"><path d="M5 0h5v6h4l-6.500 8L1 6h4z" fill="#3f95e4"/></svg><span data-fit class="ml-[4px] w-[46px]">Загрузки</span><svg class="size-[10px] ml-auto mr-[2px]"><use href="#pin"/></svg></div>
          <div class="flex items-center h-[22.500px]"><svg class="w-[15px] h-[14px]" viewBox="0 0 15 14"><path d="M2 0h8l3 3v11H2z" fill="#eef5fb"/><path d="M4 4h3M4 6.500h7M4 9h7M4 11.500h7M9 3v2" stroke="#4a9ad4" stroke-width="1.300"/></svg><span data-fit class="ml-[4px] w-[59px]">Документы</span><svg class="size-[10px] ml-auto mr-[2px]"><use href="#pin"/></svg></div>
          <div class="flex items-center h-[22.500px]"><svg class="w-[15px] h-[12px]" viewBox="0 0 15 12"><path d="M0 0h15v12H0z" fill="#eee"/><path d="M1.500 2h12v8h-12z" fill="#78bde8"/><path d="M1.500 10V6l5 1 7 1v2z" fill="#36566b"/></svg><span data-fit class="ml-[4px] w-[71px]">Изображения</span><svg class="size-[10px] ml-auto mr-[2px]"><use href="#pin"/></svg></div>
          <div class="flex items-center h-[22.500px]"><svg class="w-[15px] h-4"><use href="#folder"/></svg><span data-fit class="ml-[4px] w-[33px]">Games</span></div>
          <div class="flex items-center h-[22.500px]"><svg class="w-[15px] h-4"><use href="#folder"/></svg><span data-fit class="ml-[4px] w-[88px]">Telegram Desktop</span></div>
          <div class="flex items-center h-[22.500px]"><svg class="w-[15px] h-4"><use href="#folder"/></svg><span data-fit class="ml-[4px] w-[19px]">Win</span></div>
          <div class="flex items-center h-[22.500px]"><svg class="w-[15px] h-4"><use href="#folder"/></svg><span data-fit class="ml-[4px] w-[14px]">ИБ</span></div>
        </div>
        <div class="flex flex-col items-center w-[18px] pt-[6px] text-[#999]"><svg class="w-[8px] h-[7px]"><use href="#up"/></svg><i class="w-[14px] h-[42px] mt-[18px] bg-[#4d4d4d]"></i><svg class="w-[8px] h-[7px] mt-[83px]"><use href="#down"/></svg></div>
      </div>
      <div class="grow bg-[#202020]">
        <div class="flex h-[25px] items-center text-[#d0d0d0]"><div class="flex w-[257px] h-full pl-[18px] pt-[5px] border-r border-[#555]"><span data-fit class="w-[22px]">Имя</span><svg class="w-[9px] h-[6px] ml-[90px] -mt-[4px] text-[#aaa]" viewBox="0 0 10 8"><use href="#up"/></svg></div><div class="flex w-[135px] h-full pl-[6px] pt-[5px] border-r border-[#555]"><span data-fit class="w-[82px]">Дата изменения</span></div><div class="flex w-[112px] h-full pl-[6px] pt-[5px] border-r border-[#555]"><span data-fit class="w-[19px]">Тип</span></div><div class="flex w-[75px] h-full pl-[7px] pt-[5px] border-r border-[#555]"><span data-fit class="w-[37px]">Размер</span></div></div>
        <div class="flex items-center h-[22px] mt-[4px] pl-[18px]"><svg class="w-[15px] h-[14px]"><use href="#word"/></svg><span data-fit class="ml-[4px] w-[18px]">test</span><span data-fit class="ml-[207px] w-[79px] text-[#c8c8c8]">28.10.2020 19:37</span><span data-fit class="ml-[56px] w-[96px] text-[#c8c8c8]">Документ Micros...</span><span data-fit class="ml-[51px] w-[27px] text-[#c8c8c8]">12 КБ</span></div>
      </div>
    </div>
    <div class="flex items-center h-[21px] bg-[#333] shrink-0 pl-[13px]"><span data-fit class="w-[52px]">1 элемент</span><i class="w-px h-[10px] bg-[#ccc] ml-[9px]"></i><div class="flex items-center justify-start pl-[4px] w-[18px] h-full bg-[#6a6a6a] ml-auto"><svg class="w-[5px] h-[12px]" viewBox="0 0 5 12" fill="none" stroke="#eee"><path d="M.5.5h4v11h-4zM.5 4h4M.5 8h4"/></svg></div></div>
  </section>

  <!-- Word window -->
  <section class="absolute left-[34px] top-[213px] w-[341px] h-[157px] flex flex-col border border-b-0 border-[#2b579a] bg-white shadow-[0_1px_9px_rgba(0,0,0,0.5)]">
    <div class="flex items-center h-[29px] border-b border-[#a7b5c8] shrink-0 pl-[9px] text-[#555]"><svg class="w-[15px] h-[14px]"><use href="#word"/></svg><span data-fit class="ml-[22px] w-[199px] mt-0.5">test - Word (Сбой активации продукта)</span><i class="w-[9px] h-[2px] bg-[#666] ml-[21px]"></i><i class="w-[10px] h-[9px] border border-t-2 border-[#666] ml-[18px]"></i><svg class="size-[9px] ml-[18px]" viewBox="0 0 12 12"><path d="M1 1l10 10M11 1L1 11" stroke="#555" stroke-width="2"/></svg></div>
    <div class="flex h-[90px] shrink-0 pt-[42px] pl-[22px] border-r-[15px] border-[#f4f4f4] text-[17.500px] leading-6 font-['Open_Sans',sans-serif] font-light text-[#1a1a1a]">
      <i class="w-px h-[24px] bg-black"></i><span data-fit class="w-[139px]">It’s file for Dmitry</span><span data-fit class="ml-[5px] w-[91px] underline decoration-wavy decoration-[#e0202c] decoration-1 underline-offset-2 [text-decoration-skip-ink:none]">Andreevich</span><span data-fit class="ml-[5px] w-[53px] underline decoration-wavy decoration-[#e0202c] decoration-1 underline-offset-2 [text-decoration-skip-ink:none]">Izergin</span>
    </div>
    <div class="h-[15px] bg-[#f0f0f0] shrink-0"></div>
    <div class="flex items-center h-[22px] bg-[#2b579a] text-white pl-[66px]">
      <svg class="w-[14px] h-[12px]" viewBox="0 0 14 12" fill="none" stroke="#fff"><path d="M7 2L5 .500H.500v10H5L7 12l2-1.500h4.500V.500H9zM7 2v10M2 3h3M2 5.500h3M2 8h3M9 3h3M9 5.500h3M9 8h3"/></svg>
      <div class="flex items-center justify-center w-[35px] h-full bg-[#1c4587] ml-[12px]"><svg class="w-[14px] h-[12px]" viewBox="0 0 14 12" fill="none" stroke="#fff"><path d="M.5.5h13v11H.5zM2.500 3h9M2.500 5h9M2.500 7h9M2.500 9h9"/></svg></div>
      <svg class="w-[14px] h-[12px] ml-[11px]" viewBox="0 0 14 12" fill="none" stroke="#fff"><path d="M6 11.500H.5V.5h11V4M2.500 3h7M2.500 5h5M2.500 7h4"/><circle cx="10" cy="8.500" r="3"/><path d="M8 7l4 3"/></svg>
      <i class="w-[6px] h-[2px] bg-white ml-[15px]"></i>
      <div class="flex items-center w-[93px] ml-[4px]"><i class="w-[45px] h-px bg-[#b8c8e4]"></i><i class="w-[4px] h-[10px] bg-white"></i><i class="grow h-px bg-[#b8c8e4]"></i></div>
      <svg class="size-[8px] ml-[4px]" viewBox="0 0 8 8"><path d="M4 0v8M0 4h8" stroke="#fff" stroke-width="2"/></svg>
      <span data-fit class="ml-[15px] w-[25px] text-[10.500px]">100%</span>
    </div>
  </section>

  <!-- Caption and pointer marker -->
  <div class="absolute left-[244px] top-[546px] flex text-[57px] leading-[80px] font-bold text-[#fe0000]"><span data-fit class="w-[702px]">Создаём файл test.docx</span></div>
  <i class="absolute left-[50px] top-[78px] size-[15px] rounded-full bg-black"></i>
</div>
<script>
  // Tracks a label so that its text fills the width of its box.
  function fit(el) {
    var w = el.clientWidth;
    if (!w) return;
    el.style.whiteSpace = 'nowrap';
    el.style.flexShrink = '0';
    el.style.letterSpacing = '0px';
    var r = document.createRange();
    r.selectNodeContents(el);
    el.style.letterSpacing = ((el.clientWidth - r.getBoundingClientRect().width) / el.textContent.length) + 'px';
  }
  function fitAll() { document.querySelectorAll('[data-fit]').forEach(fit); }
  var watcher = new ResizeObserver(function (list) { list.forEach(function (e) { fit(e.target); }); });
  document.querySelectorAll('[data-fit]').forEach(function (el) { watcher.observe(el); });
  window.addEventListener('load', fitAll);
</script>
</body>
</html>
